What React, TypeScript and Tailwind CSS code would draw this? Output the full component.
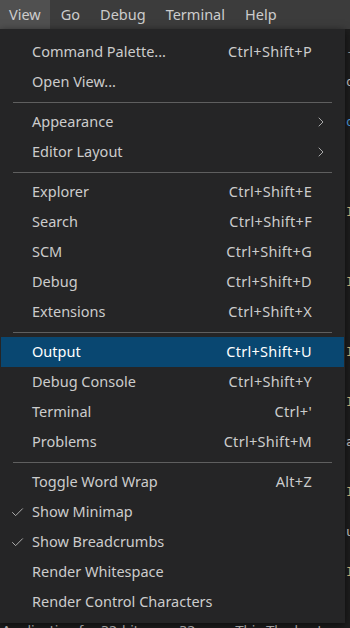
import { Check, ChevronRight } from "lucide-react";

type Item =
  | { sep: true }
  | { label: string; keys?: string; sub?: boolean; checked?: boolean; active?: boolean };

const items: Item[] = [
  { label: "Command Palette...", keys: "Ctrl+Shift+P" },
  { label: "Open View..." },
  { sep: true },
  { label: "Appearance", sub: true },
  { label: "Editor Layout", sub: true },
  { sep: true },
  { label: "Explorer", keys: "Ctrl+Shift+E" },
  { label: "Search", keys: "Ctrl+Shift+F" },
  { label: "SCM", keys: "Ctrl+Shift+G" },
  { label: "Debug", keys: "Ctrl+Shift+D" },
  { label: "Extensions", keys: "Ctrl+Shift+X" },
  { sep: true },
  { label: "Output", keys: "Ctrl+Shift+U", active: true },
  { label: "Debug Console", keys: "Ctrl+Shift+Y" },
  { label: "Terminal", keys: "Ctrl+'" },
  { label: "Problems", keys: "Ctrl+Shift+M" },
  { sep: true },
  { label: "Toggle Word Wrap", keys: "Alt+Z" },
  { label: "Show Minimap", checked: true },
  { label: "Show Breadcrumbs", checked: true },
  { label: "Render Whitespace" },
  { label: "Render Control Characters" },
];

const top = ["View", "Go", "Debug", "Terminal", "Help"];

// glyphs of the editor that peek out to the right of the menu
const peek = [
  { t: "-", c: "text-[#9a9a9a]", mt: "mt-[14px]" },
  { t: "o", c: "text-[#cccccc]", mt: "mt-[12px]" },
  { t: "o", c: "text-[#4fa0e0]", mt: "mt-[22px]" },
  { t: "I", c: "text-[#d7ba7d]", mt: "mt-[72px]" },
  { t: "I", c: "text-[#d7ba7d]", mt: "mt-[52px]" },
  { t: "I", c: "text-[#d7ba7d]", mt: "mt-[52px]" },
  { t: "I", c: "text-[#d7ba7d]", mt: "mt-[32px]" },
  { t: "a", c: "text-[#cccccc]", mt: "mt-[22px]" },
  { t: "I", c: "text-[#d7ba7d]", mt: "mt-[32px]" },
  { t: "u", c: "text-[#cccccc]", mt: "mt-[22px]" },
  { t: "I", c: "text-[#d7ba7d]", mt: "mt-[22px]" },
];

export default function App() {
  return (
    <div className="relative w-[350px] h-[628px] overflow-hidden bg-[#1e1e1e] font-['Noto_Sans',sans-serif]">
      <div className="flex h-[29px] bg-[#3c3c3c] text-[14.5px] text-[#cccccc]">
        {top.map((t, i) => (
          <div
            key={t}
            className={`flex items-center px-[9px] ${i === 0 ? "bg-[#505050]" : ""} ${i > 0 ? "ml-[2px]" : ""}`}
          >
            {t}
          </div>
        ))}
      </div>

      <div className="flex flex-col pl-[346px] text-[13px] leading-[18px] font-['DejaVu_Sans_Mono',monospace]">
        {peek.map((p, i) => (
          <div key={i} className={`${p.mt} ${p.c} whitespace-nowrap`}>
            {p.t}
          </div>
        ))}
      </div>
      <div className="absolute left-0 top-[621px] flex gap-[40px] pl-[2px] text-[13px] text-[#cccccc] whitespace-nowrap font-['DejaVu_Sans',sans-serif]">
        <span>Application for 32-bit</span>
        <span>32</span>
        <span>This The host</span>
      </div>

      <div className="absolute left-0 top-[29px] w-[345px] bg-[#252526] pt-[8px] pb-[6px] shadow-[0_2px_8px_rgba(0,0,0,0.6)] text-[14.5px] text-[#cccccc]">
        {items.map((it, i) =>
          "sep" in it ? (
            <div key={i} className="h-[10px] flex items-center px-[13px]">
              <div className="h-px w-full bg-[#5f5f5f]" />
            </div>
          ) : (
            <div
              key={i}
              className={`flex items-center h-[30px] mx-[1px] pl-[31px] pr-[32px] relative ${
                it.active ? "bg-[#094771] text-white" : ""
              }`}
            >
              {it.checked && (
                <Check className="absolute left-[9px] w-[15px] h-[15px]" strokeWidth={1.3} />
              )}
              <span className="flex-1 whitespace-nowrap">{it.label}</span>
              {it.keys && <span className="whitespace-nowrap tracking-[0.3px]">{it.keys}</span>}
              {it.sub && (
                <ChevronRight className="absolute right-[15px] w-[16px] h-[16px]" strokeWidth={1.2} />
              )}
            </div>
          )
        )}
      </div>
    </div>
  );
}
